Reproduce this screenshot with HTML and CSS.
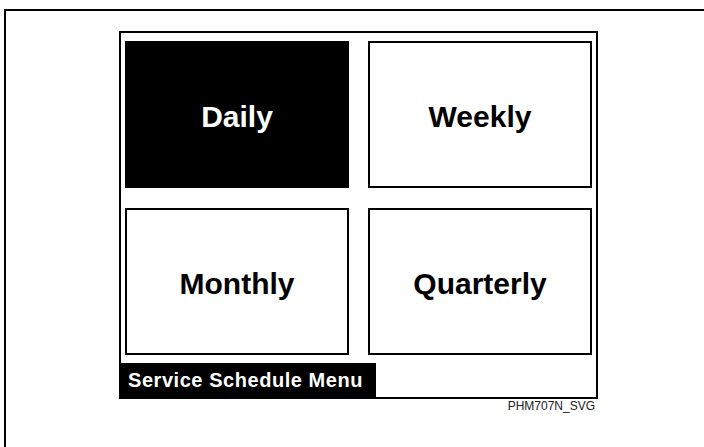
FILE: index.html
```html
<!DOCTYPE html>
<html lang="en">
<head>
  <meta charset="UTF-8">
  <title>Service Schedule Menu</title>
  <link rel="stylesheet" href="styles.css">
</head>
<body>
  <div class="frame">
    <div class="panel">
      <div class="grid">
        <div class="tile active">Daily</div>
        <div class="tile">Weekly</div>
        <div class="tile">Monthly</div>
        <div class="tile">Quarterly</div>
      </div>
      <div class="title">Service Schedule Menu</div>
    </div>
    <div class="caption">PHM707N_SVG</div>
  </div>
</body>
</html>
```

FILE: styles.css
```css
html, body {
  margin: 0;
  height: 100%;
  overflow: hidden;
  background: #fff;
}
body {
  font-family: 'Liberation Sans', Arial, sans-serif;
  padding: 9px 0 0 4px;
  box-sizing: border-box;
}
.frame {
  border-top: 2px solid #000;
  border-left: 2px solid #000;
  width: 700px;
  height: 438px;
  padding: 20px 0 0 113px;
  box-sizing: border-box;
}
.panel {
  width: 479px;
  height: 368px;
  box-sizing: border-box;
  border: 2px solid #000;
  display: flex;
  flex-direction: column;
}
.grid {
  display: grid;
  grid-template-columns: 224px 224px;
  grid-template-rows: 147px 147px;
  column-gap: 19px;
  row-gap: 20px;
  padding: 8px 4px 0 4px;
}
.tile {
  border: 2px solid #000;
  display: flex;
  align-items: center;
  justify-content: center;
  padding-top: 4px;
  font-size: 30px;
  font-weight: bold;
  color: #000;
}
.tile.active {
  background: #000;
  color: #fff;
}
.title {
  margin-top: auto;
  width: 255px;
  height: 34px;
  background: #000;
  color: #fff;
  font-size: 20px;
  font-weight: bold;
  letter-spacing: 0.55px;
  line-height: 34px;
  padding-left: 7px;
  box-sizing: border-box;
}
.caption {
  width: 479px;
  text-align: right;
  padding-right: 3px;
  box-sizing: border-box;
  font-size: 12px;
  line-height: 13px;
  margin-top: 1px;
  color: #222;
}
```
